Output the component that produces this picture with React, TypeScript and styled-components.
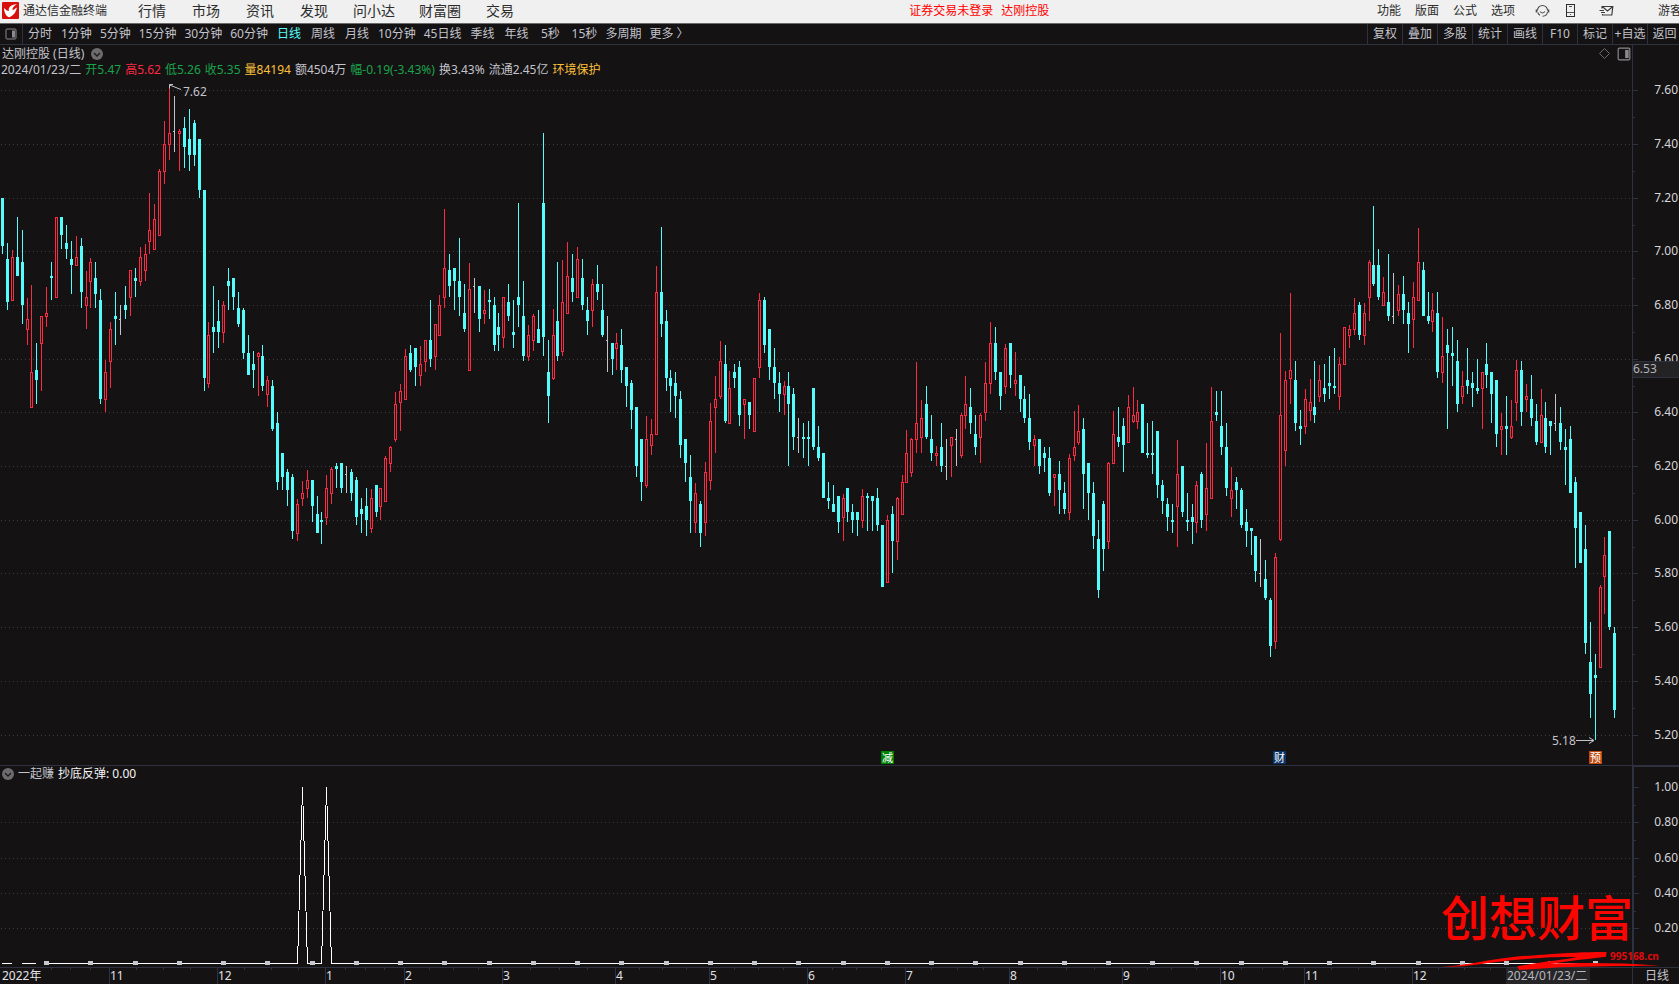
import React from "react";
import styled, { createGlobalStyle } from "styled-components";

const FONT = '"Noto Sans", "Noto Sans CJK SC", sans-serif';
const CYAN = "#54fcfc";
const RED = "#fb2943";
const LINE = "#2e3240";
const SOFT = "#c3c3cb";

/* ---------- data ---------- */

// One candle per entry: kind (c falling, r rising, w unchanged), then the
// screen rows of the high, the body top, the body bottom and the low.
const CANDLES = `
c198 198 246 254|c243 259 302 310|r250 257 301 301|c217 257 276 276|c230 262 305 324|r298 319 330 345|r285 372 408 408|c343 370 380 404
r316 316 344 391|r287 313 317 327|c262 276 278 300|r217 217 298 298|c217 217 235 249|c225 243 249 259|c241 259 265 294|r236 257 266 266
c238 246 292 308|r271 297 306 329|r258 262 282 308|c262 278 294 308|c289 300 399 404|r360 372 400 412|r322 329 362 388|c292 316 319 345
w305 319 319 335|c286 305 310 319|r270 270 298 316|c268 278 281 297|r247 257 282 286|r244 254 271 281|r193 230 242 254|r204 219 250 250
r169 171 236 236|r121 144 172 184|r88 133 145 160|w96 131 131 152|r129 131 134 171|c117 128 147 168|c109 139 155 171|c120 123 155 166
c139 139 190 198|c190 190 378 391|r322 335 384 388|c286 327 332 353|c300 321 332 348|r301 305 333 343|c268 281 286 310|c278 278 297 310
c292 308 324 327|c308 310 353 359|c335 353 375 375|c351 364 370 388|r352 353 357 396|c345 356 386 391|r376 380 395 407|c380 386 429 431
c412 423 482 490|c453 453 477 490|c469 472 490 506|c474 477 531 539|r499 504 534 541|r481 493 499 506|r470 480 489 498|c480 480 506 522
c496 514 533 533|c512 520 522 544|r475 488 518 525|r467 469 494 504|c463 466 469 488|c463 463 488 493|w466 474 474 493|c469 472 493 501
c477 480 517 525|c498 509 514 533|c488 506 520 536|r489 498 529 533|c485 485 512 517|r488 488 507 520|r456 458 502 502|r446 447 464 472
r392 404 440 442|r384 391 403 431|r349 356 400 400|c345 353 370 372|c348 348 367 386|r346 364 376 386|r340 340 362 372|c300 340 359 367
r324 324 357 370|r295 305 336 336|r209 268 298 308|c254 270 286 297|c268 268 281 310|c238 281 297 316|c284 313 329 332|r263 289 371 371
w278 286 286 313|c286 286 319 332|r290 310 314 324|c289 300 302 319|c297 305 345 351|c313 327 335 351|r297 297 338 348|c284 302 316 321
c300 332 335 348|c203 297 305 327|c281 316 356 361|r325 335 357 361|r314 316 341 351|c310 329 343 343|c133 203 337 356|c340 372 396 423
r309 335 379 380|c262 321 356 361|r260 302 352 356|r242 276 314 314|c254 278 292 302|r247 259 298 298|c259 278 305 310|c297 310 321 335
r279 284 311 327|c265 284 292 300|c284 310 335 337|w316 340 340 372|c343 343 359 375|r333 343 349 370|c329 345 370 383|c367 367 386 407
c380 383 410 429|c407 407 466 477|c439 439 482 501|r416 439 486 488|r419 434 446 455|r266 292 435 435|c227 292 324 337|c310 321 378 391
c370 378 386 412|c372 383 396 418|c391 399 445 458|c439 439 463 482|c455 477 501 533|r483 493 523 533|c501 504 533 547|r462 472 523 536
r403 421 481 490|r376 399 408 453|r341 361 397 399|c345 364 421 423|r371 388 424 424|c364 372 378 388|c361 367 415 426|r399 399 405 439
c402 402 415 429|r378 378 432 432|r293 300 368 378|c297 300 345 353|c329 329 367 380|c348 367 383 399|c372 383 394 412|r381 386 395 415
c372 386 404 466|c388 394 437 450|w418 437 437 453|c423 437 439 458|c421 437 439 466|c388 388 447 450|c426 447 458 461|c453 453 498 498
c482 498 501 509|c485 504 512 512|c496 496 522 533|r494 498 518 541|c488 488 512 522|c504 512 520 533|c512 512 520 536|r489 496 521 528
c493 496 498 531|c496 496 501 531|c488 498 525 531|c525 525 587 587|r515 520 583 583|c506 514 541 573|r497 498 542 560|r475 482 515 515
r430 453 483 483|r438 439 473 477|r362 423 440 453|r400 418 438 453|c386 404 437 439|c415 439 453 461|r446 453 456 466|c423 447 466 472
w439 466 466 480|r437 437 446 477|w429 439 439 466|r413 415 456 458|r376 404 416 429|c388 407 423 434|c415 434 447 455|r413 415 438 463
r362 383 413 421|r322 343 384 394|c327 343 372 380|c372 372 396 410|r344 348 387 394|c343 343 375 388|r352 380 384 396|c375 375 399 412
c386 399 418 423|c394 418 442 450|r435 439 446 466|c439 439 466 474|c447 453 458 472|c447 458 493 496|r474 474 478 506|c461 474 490 514
c482 493 509 514|r454 458 513 520|r411 447 456 461|r405 431 443 445|c418 429 474 509|c463 463 493 520|c482 493 536 549|c520 539 590 598
c501 504 549 571|r462 463 542 549|r411 434 464 464|c407 437 442 447|c418 426 445 472|r395 407 443 443|r387 415 422 423|r400 412 422 429
c404 404 453 453|c423 453 455 458|c421 453 455 474|c431 431 485 498|c480 485 501 514|c498 504 517 531|c504 520 522 533|r440 474 507 547
c466 466 512 517|c493 520 522 531|c504 517 522 544|r481 485 523 533|c472 474 520 528|r443 488 515 531|r387 421 499 499|c391 412 415 421
c391 426 447 455|c423 447 488 496|r467 490 499 517|c477 482 490 509|c488 490 525 528|c509 522 531 547|c528 528 531 555|c536 536 571 582
w539 573 573 587|c560 579 598 600|c598 600 646 657|r553 557 642 649|r333 415 540 541|r371 380 451 466|r293 370 379 404|c361 380 423 431
c410 426 429 445|r389 399 427 434|r379 402 411 421|c361 407 415 423|r365 380 397 402|c364 388 394 402|c356 383 386 399|c348 386 388 394
r357 364 397 410|r327 327 365 365|r325 329 336 348|r298 313 330 335|c302 305 335 340|r303 313 336 345|r260 262 298 321|c206 265 284 286
c249 265 297 300|r277 292 306 306|c254 302 316 321|w273 316 316 324|r285 294 311 316|c276 294 310 324|c302 313 324 353|r282 297 320 348
r228 262 301 301|c262 270 316 316|c292 316 321 324|r293 310 322 332|c292 313 372 378|r317 356 373 383|c329 345 353 429|c327 353 356 386
c340 361 404 412|r371 386 397 404|c348 380 386 394|c372 383 388 407|c359 388 391 394|r372 372 389 429|c343 364 375 388|c372 372 394 423
c380 380 434 447|r413 426 430 455|c396 426 429 455|r400 426 438 439|r360 370 403 421|c361 370 412 426|r384 396 400 412|c375 399 418 426
c404 421 442 445|r389 415 443 443|c402 418 447 453|c421 421 426 455|w394 423 423 431|c407 423 442 450|c429 447 450 485|c426 439 493 493
c477 482 528 568|c512 512 563 563|c525 549 643 654|c622 662 694 718|c654 675 678 740|r585 587 668 668|r537 555 577 614|c531 531 627 630
c627 633 710 718`
  .trim()
  .split(/[|\n]/)
  .map((s) => {
    const [high, top, bottom, low] = s.slice(1).split(" ").map(Number);
    return { kind: s[0], high, top, bottom, low };
  });

// Pixel column of a bar; the pitch is a little under five pixels.
const barX = (i: number) => 2 + 5 * i - (Math.floor((i - 5.5) / 11.86) + 1);

const PERIODS = [
  "分时", "1分钟", "5分钟", "15分钟", "30分钟", "60分钟", "日线", "周线", "月线",
  "10分钟", "45日线", "季线", "年线", "5秒", "15秒", "多周期", "更多 〉",
];
const TOOLS = ["复权", "叠加", "多股", "统计", "画线", "F10", "标记", "+自选", "返回"];
const MENU = ["行情", "市场", "资讯", "发现", "问小达", "财富圈", "交易"];
const OPTIONS = ["功能", "版面", "公式", "选项"];

const QUOTE: [string, string][] = [
  ["2024/01/23/二", SOFT],
  ["开5.47", "#1ba34b"],
  ["高5.62", RED],
  ["低5.26", "#1ba34b"],
  ["收5.35", "#1ba34b"],
  ["量84194", "#fdc03a"],
  ["额4504万", SOFT],
  ["幅-0.19(-3.43%)", "#1ba34b"],
  ["换3.43%", SOFT],
  ["流通2.45亿", SOFT],
  ["环境保护", "#fdc03a"],
];

const PRICE_ROWS: [string, number][] = [
  ["7.60", 90], ["7.40", 144], ["7.20", 198], ["7.00", 251], ["6.80", 305], ["6.60", 359],
  ["6.40", 412], ["6.20", 466], ["6.00", 520], ["5.80", 573], ["5.60", 627], ["5.40", 681], ["5.20", 735],
];
const SIGNAL_ROWS: [string, number][] = [
  ["1.00", 787], ["0.80", 822], ["0.60", 858], ["0.40", 893], ["0.20", 928],
];
const MONTHS: [string, number][] = [
  ["11", 109], ["12", 217], ["1", 325], ["2", 404], ["3", 502], ["4", 615], ["5", 709],
  ["6", 807], ["7", 905], ["8", 1009], ["9", 1122], ["10", 1220], ["11", 1304], ["12", 1412],
];
const EVENTS: [string, number, string][] = [
  ["减", 881, "#008000"], ["财", 1273, "#0a3468"], ["预", 1589, "#c24a0c"],
];

/* ---------- styles ---------- */

const GlobalStyle = createGlobalStyle`
  * { box-sizing: border-box; }
  body { margin: 0; background: #141213; font: 12px/16px ${FONT}; color: ${SOFT}; overflow-x: hidden; }
  button { font: inherit; color: inherit; background: none; border: 0; padding: 0; margin: 0; white-space: nowrap; cursor: pointer; }
  svg { display: block; flex: none; }
`;
const Page = styled.div`
  display: flex;
  flex-direction: column;
  overflow: hidden;
`;
const Header = styled.header`
  display: flex;
  align-items: center;
  height: 24px;
  padding-left: 2px;
  padding-bottom: 2px;
  background: #f0f0f0;
  border-bottom: 1px solid #6a6a6a;
  color: #2c2c2c;
  overflow: hidden;
`;
const Brand = styled.h1`
  margin: 0;
  width: 106px;
  padding-left: 4px;
  font: inherit;
  white-space: nowrap;
`;
const MenuButton = styled.button`
  && {
    min-width: 54px;
    padding: 0 12px;
    font-size: 14px;
    line-height: 20px;
  }
`;
const Spacer = styled.div<{ $grow: number }>`
  flex: ${(p) => p.$grow} 1 0;
`;
const Status = styled.p`
  display: flex;
  gap: 8px;
  margin: 0;
  color: #ff0000;
  white-space: nowrap;
`;
const OptionButton = styled.button`
  && {
    width: 38px;
    text-align: left;
  }
`;
const IconButton = styled.button<{ $width: number }>`
  && {
    display: flex;
    justify-content: center;
    width: ${(p) => p.$width}px;
  }
`;
const GuestButton = styled.button`
  && {
    width: 21px;
    margin-left: 33px;
    text-align: left;
  }
`;
const Toolbar = styled.nav`
  display: flex;
  align-items: stretch;
  height: 21px;
  border-bottom: 1px solid ${LINE};
  overflow: hidden;
`;
const PanelToggle = styled.button`
  && {
    width: 23px;
    padding-left: 5px;
    border-right: 1px solid ${LINE};
  }
`;
const PeriodButton = styled.button<{ $active: boolean }>`
  && {
    min-width: 34px;
    padding: 0 4px;
    color: ${(p) => (p.$active ? CYAN : SOFT)};
  }
`;
const ToolGroup = styled.div`
  display: flex;
  margin-left: auto;
`;
const ToolButton = styled.button`
  && {
    width: 35px;
    border-left: 1px solid ${LINE};
  }
  &&:last-child {
    width: 32px;
    padding-left: 2px;
  }
`;
const Chart = styled.main`
  position: relative;
  display: grid;
  grid-template-columns: minmax(0, 1fr) 47px;
`;
const Pane = styled.section<{ $ruled?: boolean }>`
  border-top: ${(p) => (p.$ruled ? `1px solid ${LINE}` : "0")};
`;
const AxisPane = styled.aside<{ $heavy?: boolean }>`
  border-left: ${(p) => (p.$heavy ? 2 : 1)}px solid ${LINE};
  border-top: ${(p) => (p.$heavy ? `2px solid ${LINE}` : "0")};
`;
const TitleRow = styled.div`
  display: flex;
  align-items: center;
  justify-content: space-between;
  height: 17px;
  padding: 0 1px 0 2px;
`;
const Label = styled.h2`
  display: flex;
  align-items: center;
  gap: 7px;
  margin: 0;
  font: inherit;
`;
const IconRow = styled.div`
  display: flex;
  align-items: center;
  gap: 7px;
`;
const QuoteRow = styled.div`
  display: flex;
  gap: 4px;
  height: 18px;
  padding-left: 1px;
  white-space: nowrap;
`;
const QuoteItem = styled.span<{ $color: string }>`
  color: ${(p) => p.$color};
`;
const SignalHead = styled.div`
  display: flex;
  align-items: center;
  gap: 4px;
  height: 17px;
  padding: 0 0 2px 2px;
`;
const SignalValue = styled.span`
  color: #f4f4f4;
`;
const TimeAxis = styled.div`
  border-top: 1px solid ${LINE};
  height: 17px;
  overflow: hidden;
`;
const PeriodCell = styled.div`
  border-left: 1px solid ${LINE};
  border-top: 1px solid ${LINE};
  padding-left: 12px;
  height: 17px;
`;
const Watermark = styled.div`
  position: absolute;
  right: 0;
  bottom: 0;
  pointer-events: none;
`;

/* ---------- drawings ---------- */

const Logo = () => (
  <svg width="17" height="17" viewBox="0 0 17 17" aria-hidden="true">
    <rect width="17" height="17" rx="1" fill="#d8100c" />
    <path d="M2 6 C4 8 5 9 7 9 C6 6 8 3 15 2 C12 4 10 6 10.500 8 C12 8 13 6.500 15 5.500 C14 10 12 13 8 15 C5 16 2 11 2 6Z" fill="#fff" />
  </svg>
);
const PanelIcon = ({ size }: { size: number }) => (
  <svg width={size} height={size} viewBox="0 0 12 12" aria-hidden="true">
    <rect x="1" y="1" width="10" height="10" rx="1" fill="none" stroke="#8a8a8e" strokeWidth="1" />
    <rect x="7" y="2.500" width="3" height="7" fill="#8a8a8e" />
  </svg>
);
const ChevronDot = () => (
  <svg width="12" height="12" viewBox="0 0 12 12" aria-hidden="true">
    <circle cx="6" cy="6" r="6" fill="#6c6c6e" />
    <path d="M3 5 L6 8 L9 5" fill="none" stroke="#1c1a1b" strokeWidth="1.300" />
  </svg>
);
const HeadsetIcon = () => (
  <svg width="15" height="14" viewBox="0 0 15 14" fill="none" stroke="#4a4a4a" strokeWidth="1.100" aria-hidden="true">
    <path d="M2.500 6.500 A5 5 0 0 1 12.500 6.500 M12.500 8 A5 5 0 0 1 7.500 12.200 M2.800 8.500 A5 5 0 0 0 5 11.300 M5 7.500 Q7.500 10.500 10 7.500" />
    <path d="M1.500 5.500 V8.500 M13.500 5.500 V8.500" strokeWidth="1.600" />
  </svg>
);
const PhoneIcon = () => (
  <svg width="10" height="14" viewBox="0 0 10 14" fill="none" stroke="#2c2c2c" aria-hidden="true">
    <rect x="0.500" y="0.500" width="8" height="12" />
    <path d="M3 2.500 H6 M4 10.500 H5 M0.500 8.500 H8.500" strokeWidth="0.800" />
  </svg>
);
const MailIcon = () => (
  <svg width="15" height="12" viewBox="0 0 15 12" fill="none" stroke="#3c3c3c" strokeWidth="1.200" aria-hidden="true">
    <path d="M3 3.500 V1.500 H13.800 L12.800 10 H3.500 V9 M0.500 5.500 H5 M2 7.500 H6 M3.500 1.800 L8.500 6 L13.500 1.800" />
  </svg>
);

const dots = { stroke: "#3b3b41", strokeDasharray: "1 3", shapeRendering: "crispEdges" as const };

const box = (x: number, y: number, w: number, h: number) => (h > 0 ? `M${x} ${y}h${w}v${h}h-${w}z` : "");

const falling = CANDLES.map((k, i) =>
  k.kind === "c" ? box(barX(i), k.high, 1, k.low - k.high) + box(barX(i) - 1, k.top, 3, k.bottom - k.top) : "",
).join("");
// Rising bodies are hollow: an outline one pixel thick, with the wick outside it.
const rising = CANDLES.map((k, i) => {
  if (k.kind !== "r") return "";
  const x = barX(i);
  const h = k.bottom - k.top;
  return (
    box(x, k.high, 1, k.top - k.high) + box(x, k.bottom, 1, k.low - k.bottom) +
    box(x - 1, k.top, 1, h) + box(x + 1, k.top, 1, h) + box(x, k.top, 1, 1) + box(x, k.bottom - 1, 1, 1)
  );
}).join("");
const unchanged = CANDLES.map((k, i) =>
  k.kind === "w" ? box(barX(i), k.high, 1, k.low - k.high) + box(barX(i) - 1, k.top, 1, 1) : "",
).join("");

const PricePlot = () => (
  <svg width="100%" height="685" role="img" aria-label="达刚控股 日线">
    <g transform="translate(0 -80)">
      {PRICE_ROWS.map(([label, y]) => (
        <line key={label} x1="1" x2="100%" y1={y + 0.5} y2={y + 0.5} {...dots} />
      ))}
      <g shapeRendering="crispEdges">
        <path d={falling} fill={CYAN} />
        <path d={rising} fill={RED} />
        <path d={unchanged} fill={SOFT} />
      </g>
      <g stroke={SOFT} fill="none">
        <path d="M181 89.500 L169.500 85 M173 84.500 H169.500 V88.500" />
        <path d="M1576 740.500 H1594 M1589 737.500 L1594 740.500 L1589 743.500" />
      </g>
      <g fill={SOFT}>
        <text x="183" y="96">7.62</text>
        <text x="1552" y="745">5.18</text>
      </g>
      {EVENTS.map(([label, x, color]) => (
        <g key={label}>
          <rect x={x} y="751" width="13" height="13" fill={color} />
          <text x={x + 1} y="762" fontSize="11" fill="#ffffff">{label}</text>
        </g>
      ))}
    </g>
  </svg>
);

const Scale = ({ rows, top, height, half, inset }: {
  rows: [string, number][]; top: number; height: number; half: number; inset: number;
}) => (
  <svg width={47 - inset} height={height} aria-hidden="true">
    <g transform={`translate(0 ${-top})`}>
      {rows.map(([label, y], i) => (
        <g key={label}>
          <rect x="0" y={y} width="5" height="1" fill={LINE} />
          {i < rows.length - 1 ? <rect x="0" y={y + half} width="2" height="1" fill={LINE} /> : null}
          <text x={46 - inset} y={y + 4} textAnchor="end" fill="#d6d6da">{label}</text>
        </g>
      ))}
      {inset === 1 && (
        <g>
          <rect x="0" y="361" width="47" height="17" fill="#232225" />
          <path d="M0 361.500 H47 M0 377.500 H47" stroke={LINE} />
          <text x="0" y="373" fill="#b4b4b8">6.53</text>
        </g>
      )}
    </g>
  </svg>
);

const SignalPlot = () => (
  <svg width="100%" height="184" role="img" aria-label="抄底反弹">
    <g transform="translate(0 -783)">
      {SIGNAL_ROWS.slice(1).map(([label, y]) => (
        <line key={label} x1="1" x2="100%" y1={y + 0.5} y2={y + 0.5} {...dots} />
      ))}
      <path
        d="M2 963.500 H12 M22 963.500 H36 M44 963.500 H297.500 L302.500 787 L307.500 963.500 H321.500 L326.500 787 L331.500 963.500 H1597"
        fill="none"
        stroke="#ffffff"
        shapeRendering="crispEdges"
      />
      {Array.from({ length: 36 }, (_, i) => (
        <rect key={i} x={barX(9 * (i + 1)) - 2} y="961" width="5" height="4" fill="#c6cad0" />
      ))}
    </g>
  </svg>
);

const monthEdges = [31, ...MONTHS.map(([, x]) => x), 1516];
const minorTicks = monthEdges
  .slice(0, -1)
  .flatMap((x, i) => [1, 2, 3].map((q) => Math.round(x + ((monthEdges[i + 1] - x) * q) / 4)));

const TimeScale = () => (
  <svg width="100%" height="16" role="img" aria-label="2022年 – 2024/01/23">
    {minorTicks.map((x) => (
      <rect key={x} x={x} y="0" width="1" height="2" fill={LINE} />
    ))}
    <text x="2" y="12" fill="#e4e4e8">2022年</text>
    {MONTHS.map(([label, x]) => (
      <g key={x}>
        <rect x={x} y="0" width="1" height="16" fill={LINE} />
        <text x={x + 1} y="12" fill="#e0e0e4">{label}</text>
      </g>
    ))}
    <rect x="1506" y="0" width="84" height="16" fill="#262629" />
    <text x="1507" y="12" fill="#b8b8be">2024/01/23/二</text>
  </svg>
);

/* ---------- page ---------- */

export default function App() {
  return (
    <Page>
      <GlobalStyle />
      <Header>
        <Logo />
        <Brand>通达信金融终端</Brand>
        {MENU.map((m) => (
          <MenuButton key={m}>{m}</MenuButton>
        ))}
        <Spacer $grow={7} />
        <Status>
          <span>证券交易未登录</span>
          <span>达刚控股</span>
        </Status>
        <Spacer $grow={6} />
        {OPTIONS.map((o) => (
          <OptionButton key={o}>{o}</OptionButton>
        ))}
        <IconButton $width={26} aria-label="客服"><HeadsetIcon /></IconButton>
        <IconButton $width={32} aria-label="手机"><PhoneIcon /></IconButton>
        <IconButton $width={38} aria-label="消息"><MailIcon /></IconButton>
        <GuestButton>游客</GuestButton>
      </Header>

      <Toolbar>
        <PanelToggle aria-label="面板"><PanelIcon size={12} /></PanelToggle>
        {PERIODS.map((p) => (
          <PeriodButton key={p} $active={p === "日线"}>{p}</PeriodButton>
        ))}
        <ToolGroup>
          {TOOLS.map((t) => (
            <ToolButton key={t}>{t}</ToolButton>
          ))}
        </ToolGroup>
      </Toolbar>

      <Chart>
        <Pane>
          <TitleRow>
            <Label>达刚控股 (日线) <ChevronDot /></Label>
            <IconRow>
              <svg width="11" height="11" viewBox="0 0 11 11" aria-hidden="true">
                <path d="M5.500 0.500 L10.500 5.500 L5.500 10.500 L0.500 5.500Z" fill="none" stroke="#6c6c70" />
              </svg>
              <PanelIcon size={14} />
            </IconRow>
          </TitleRow>
          <QuoteRow>
            {QUOTE.map(([text, color]) => (
              <QuoteItem key={text} $color={color}>{text}</QuoteItem>
            ))}
          </QuoteRow>
          <PricePlot />
        </Pane>
        <AxisPane>
          <Scale rows={PRICE_ROWS} top={45} height={720} half={27} inset={1} />
        </AxisPane>

        <Pane $ruled>
          <SignalHead>
            <ChevronDot />
            <span>一起赚</span>
            <SignalValue>抄底反弹: 0.00</SignalValue>
          </SignalHead>
          <SignalPlot />
        </Pane>
        <AxisPane $heavy>
          <Scale rows={SIGNAL_ROWS} top={767} height={200} half={18} inset={2} />
        </AxisPane>

        <TimeAxis>
          <TimeScale />
        </TimeAxis>
        <PeriodCell>日线</PeriodCell>

        <Watermark>
          <svg width="269" height="114" viewBox="0 0 269 114">
            <g transform="scale(.3333)">
              <path
                d="M97 291 C200 283 250 262 400 254 C480 247 560 245 590 246 L588 260 C520 268 470 274 420 281 C520 278 640 278 750 287 C640 288 540 288 450 292 L327 300 L322 289 C400 275 470 268 500 262 C430 258 300 270 220 281 C180 287 130 291 97 291Z"
                fill="#fb0500"
              />
            </g>
            <text x="31" y="66" fontSize="48" fontWeight="500" fill="#fb0500">创想财富</text>
            <text x="200" y="90" fontSize="10" fontWeight="700" fill="#e00a0c">995168.cn</text>
          </svg>
        </Watermark>
      </Chart>
    </Page>
  );
}
